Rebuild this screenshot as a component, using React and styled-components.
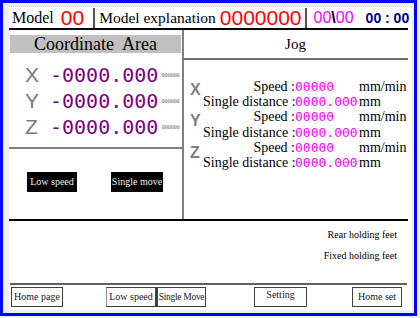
import React from "react"
import styled, { createGlobalStyle } from "styled-components"

const GlobalStyle = createGlobalStyle`
  body {
    margin: 0;
    background: #f0f0f0;
    font-family: "Liberation Serif", serif;
  }
`

const serif = `"Liberation Serif", "DejaVu Serif", serif`
const sans = `"Liberation Sans", Arial, sans-serif`
const mono = `"DejaVu Sans Mono", "Liberation Mono", monospace`

const Window = styled.div`
  box-sizing: border-box;
  width: 417px;
  height: 316px;
  border: 3px solid #0000ff;
  padding: 3px 2px 3px 6px;
  background: #f0f0f0;
`

const Screen = styled.div`
  height: 100%;
  background: #fff;
  border-top: 1px dotted #c8c8c8;
  box-sizing: border-box;
  display: flex;
  flex-direction: column;
`

const Header = styled.div`
  display: flex;
  align-items: center;
  height: 21px;
  margin-right: 4px;
  border-bottom: 2px solid #000;
  white-space: nowrap;
`

const HeadLabel = styled.span`
  font-family: ${serif};
  font-size: ${(p) => p.$size || 16}px;
  color: #000;
  margin-left: ${(p) => p.$ml || 0}px;
`

const HeadValue = styled.span`
  font-family: ${sans};
  font-size: ${(p) => p.$size || 21}px;
  color: ${(p) => p.$color};
  font-weight: ${(p) => (p.$bold ? 700 : 400)};
  margin-left: ${(p) => p.$ml || 0}px;
`

const Slash = styled.span`
  font-family: ${sans};
  font-size: 16px;
  font-weight: 700;
  color: #000;
`

const HeadSep = styled.div`
  flex-shrink: 0;
  align-self: stretch;
  width: 2px;
  margin-top: 1px;
  background: #505050;
  margin-left: ${(p) => p.$ml || 0}px;
`

const Middle = styled.div`
  display: flex;
  height: 189px;
  margin-right: 4px;
  border-bottom: 2px solid #000;
`

const LeftCol = styled.div`
  width: 173px;
  border-right: 2px solid #808080;
  display: flex;
  flex-direction: column;
  padding-top: 5px;
`

const TitleBar = styled.div`
  margin: 0 1px;
  height: 18px;
  line-height: 18px;
  background: #c0c0c0;
  font-family: ${serif};
  font-size: 18px;
  text-align: center;
  white-space: pre;
  color: #000;
`

const CoordList = styled.div`
  padding-top: 9px;
`

const CoordRow = styled.div`
  display: flex;
  align-items: center;
  height: 26px;
  padding-left: 16px;
`

const AxisBig = styled.span`
  width: 25px;
  font-family: ${sans};
  font-size: 21px;
  color: #7a7a7a;
`

const CoordValue = styled.span`
  font-family: ${mono};
  font-size: 20px;
  color: #800080;
`

const Tiny = styled.span`
  font-family: ${mono};
  font-size: 5.5px;
  color: #707070;
  margin-left: 3px;
  letter-spacing: -0.3px;
`

const SpeedBox = styled.div`
  margin-top: 7px;
  border-top: 2px solid #808080;
  flex: 1;
  display: flex;
  gap: 34px;
  padding: 23px 0 0 18px;
`

const BlackButton = styled.div`
  width: ${(p) => p.$w}px;
  height: 20px;
  line-height: 20px;
  background: #000;
  color: #f0f0f0;
  font-family: ${serif};
  font-size: 10px;
  text-align: center;
  white-space: nowrap;
`

const RightCol = styled.div`
  flex: 1;
  display: flex;
  flex-direction: column;
`

const JogTitle = styled.div`
  height: 28px;
  line-height: 28px;
  margin-left: -1px;
  border-bottom: 2px solid #707070;
  font-family: ${serif};
  font-size: 15px;
  text-align: center;
  color: #000;
`

const JogList = styled.div`
  padding-top: 19px;
`

const AxisGroup = styled.div`
  display: flex;
  align-items: flex-start;
`

const AxisSmall = styled.span`
  width: 13px;
  padding-left: 6px;
  margin-top: ${(p) => p.$mt}px;
  font-family: ${sans};
  font-size: 16px;
  line-height: 18px;
  font-weight: 700;
  color: #808080;
`

const JogGrid = styled.div`
  display: grid;
  grid-template-columns: 92px 64px auto;
  line-height: 15.2px;
  font-family: ${serif};
  font-size: 14px;
  color: #000;
  white-space: nowrap;
`

const JogLabel = styled.span`
  text-align: right;
`

const JogValue = styled.span`
  font-family: ${mono};
  font-size: 13px;
  color: #ff00ff;
`

const Status = styled.div`
  height: 62px;
  margin-right: 4px;
  padding: 3px 11px 0 0;
  box-sizing: border-box;
  text-align: right;
  font-family: ${serif};
  font-size: 10px;
  line-height: 21px;
  color: #000;
`

const Footer = styled.div`
  display: flex;
  margin: 0 5px 0 1px;
  padding-top: 2px;
  border-top: 2px solid #606060;
`

const FootButton = styled.div`
  box-sizing: border-box;
  flex-shrink: 0;
  width: ${(p) => p.$w}px;
  height: 20px;
  margin-left: ${(p) => p.$ml || 0}px;
  border: 1px solid #404040;
  border-left: ${(p) => (p.$thick ? "2px solid #404040" : p.$light ? "1px solid #909090" : "1px solid #404040")};
  font-family: ${serif};
  font-size: ${(p) => p.$size || 10}px;
  letter-spacing: ${(p) => (p.$tight ? "-0.3px" : "0")};
  line-height: ${(p) => (p.$top ? 14 : 18)}px;
  text-align: center;
  color: #202020;
  white-space: nowrap;
`

const coords = ["X", "Y", "Z"]
const axisTop = [2, 3, 4]

export default function App() {
  return (
    <>
      <GlobalStyle />
      <Window>
        <Screen>
          <Header>
            <HeadLabel $ml={3}>Model</HeadLabel>
            <HeadValue $color="#ff0000" $ml={7}>00</HeadValue>
            <HeadSep $ml={9} />
            <HeadLabel $ml={4} $size={15.5}>Model explanation</HeadLabel>
            <HeadValue $color="#ff0000" $ml={4}>0000000</HeadValue>
            <HeadSep $ml={3} />
            <HeadValue $color="#ff00ff" $size={16} $ml={7}>00</HeadValue>
            <Slash>\</Slash>
            <HeadValue $color="#ff00ff" $size={16}>00</HeadValue>
            <HeadValue $color="#000080" $size={14} $ml={12} $bold>00 : 00</HeadValue>
          </Header>
          <Middle>
            <LeftCol>
              <TitleBar>Coordinate  Area</TitleBar>
              <CoordList>
                {coords.map((c) => (
                  <CoordRow key={c}>
                    <AxisBig>{c}</AxisBig>
                    <CoordValue>-0000.000</CoordValue>
                    <Tiny>000000</Tiny>
                  </CoordRow>
                ))}
              </CoordList>
              <SpeedBox>
                <BlackButton $w={50}>Low speed</BlackButton>
                <BlackButton $w={52}>Single move</BlackButton>
              </SpeedBox>
            </LeftCol>
            <RightCol>
              <JogTitle>Jog</JogTitle>
              <JogList>
                {coords.map((c, i) => (
                  <AxisGroup key={c}>
                    <AxisSmall $mt={axisTop[i]}>{c}</AxisSmall>
                    <JogGrid>
                      <JogLabel>Speed :</JogLabel>
                      <JogValue>00000</JogValue>
                      <span>mm/min</span>
                      <JogLabel>Single distance :</JogLabel>
                      <JogValue>0000.000</JogValue>
                      <span>mm</span>
                    </JogGrid>
                  </AxisGroup>
                ))}
              </JogList>
            </RightCol>
          </Middle>
          <Status>
            <div>Rear holding feet</div>
            <div>Fixed holding feet</div>
          </Status>
          <Footer>
            <FootButton $w={52} $ml={1}>Home page</FootButton>
            <FootButton $w={50} $ml={43} $light>Low speed</FootButton>
            <FootButton $w={50} $thick $size={9.5} $tight>Single Move</FootButton>
            <FootButton $w={53} $ml={48} $top>Setting</FootButton>
            <FootButton $w={50} $ml={45}>Home set</FootButton>
          </Footer>
        </Screen>
      </Window>
    </>
  )
}
